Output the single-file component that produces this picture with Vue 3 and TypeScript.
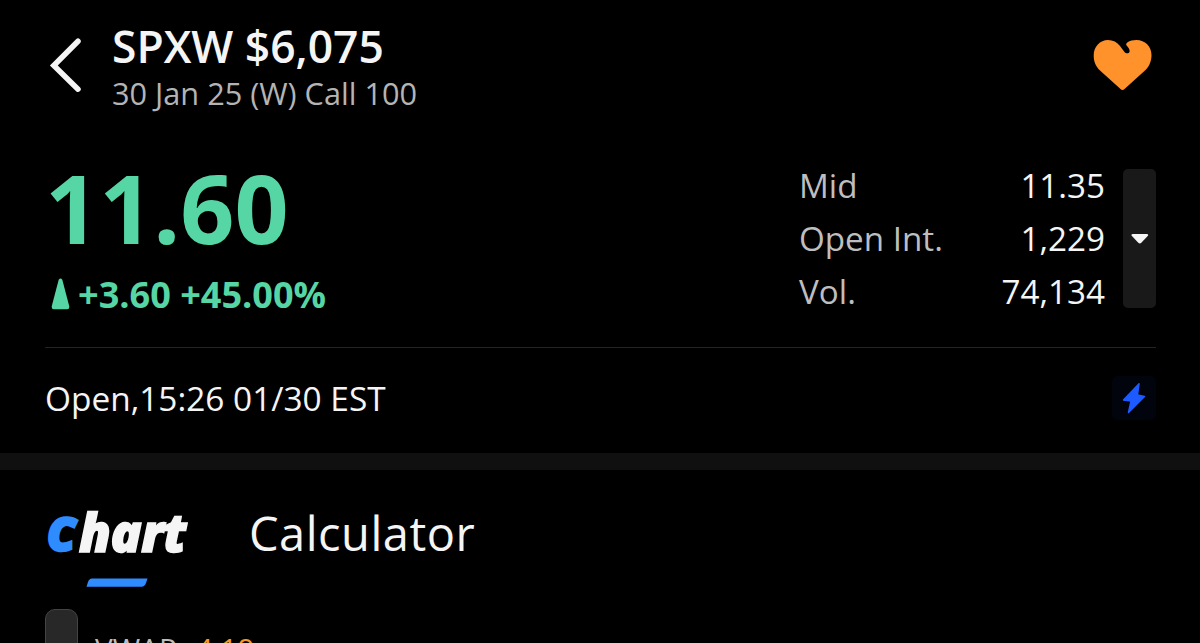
<script setup lang="ts">
interface Stat {
  label: string
  value: string
}

const stats: Stat[] = [
  { label: 'Mid', value: '11.35' },
  { label: 'Open Int.', value: '1,229' },
  { label: 'Vol.', value: '74,134' },
]
</script>

<template>
  <main class="screen">
    <header class="header">
      <svg class="back" width="36" height="60" viewBox="0 0 36 60" aria-label="Back">
        <path d="M32 6.200 L7.800 30.500 L32 54.200" />
      </svg>
      <div class="heading">
        <h1 class="title">SPXW $6,075</h1>
        <p class="subtitle">30 Jan 25 (W) Call 100</p>
      </div>
      <svg class="heart" width="60" height="54" viewBox="0 0 60 54" aria-label="Favorite">
        <path d="M28.500 50 L8 31.500 C3 26.500 1.700 21.500 1.700 16.500 C1.700 7.500 8 1 16 1 C21 1 25 3.200 28 7 L32.300 12.800 C34 15 36.800 14.600 37.500 13 C38.200 11 36.500 8.800 34.800 6.800 C33.900 5.500 34 4.300 35.300 3.400 C37.800 1.700 41 1 44.500 1 C53 1 59.500 7.500 59.500 16 C59.500 21.500 57.700 27 53.500 31 L32.500 50 Q30.500 52 28.500 50 Z" />
      </svg>
    </header>

    <section class="quote">
      <div class="price-block">
        <div class="price">11.60</div>
        <div class="change">
          <svg width="20" height="32" viewBox="0 0 20 32">
            <path d="M7.700 1.800 Q9.500 -0.900 11.300 1.800 L18.200 28 Q18.700 31.300 16.200 31.300 H2.800 Q0.200 31.300 0.800 28 Z" />
          </svg>
          <span>+3.60 +45.00%</span>
        </div>
      </div>
      <dl class="stats">
        <div v-for="stat in stats" :key="stat.label" class="stat">
          <dt>{{ stat.label }}</dt>
          <dd>{{ stat.value }}</dd>
        </div>
      </dl>
      <button class="expand" aria-label="Expand">
        <svg width="18" height="12" viewBox="0 0 18 12">
          <path d="M1.800 1 H15.700 Q18 1.300 16.700 3 L10.300 9.800 Q8.800 11.300 7.300 9.800 L0.900 3 Q-0.300 1.300 1.800 1 Z" />
        </svg>
      </button>
    </section>

    <section class="status">
      <span class="status-text">Open,15:26 01/30 EST</span>
      <span class="bolt">
        <svg width="24" height="32" viewBox="0 0 24 32">
          <path d="M17 1.800 L1.500 18 L9 19 L6.500 30.500 L22.500 14.500 L15.500 13 Z" />
        </svg>
      </span>
    </section>

    <div class="band"></div>

    <nav class="tabs">
      <div class="tab active">
        <span class="tab-label"><span class="initial">C</span><span class="rest">hart</span></span>
        <svg class="underline" width="62" height="9" viewBox="0 0 62 9">
          <path d="M6 0.500 H61.500 L60 5 Q58.500 8.800 55.500 8.800 H0.500 L2 4 Q3.200 0.500 6 0.500 Z" />
        </svg>
      </div>
      <div class="tab plain">Calculator</div>
    </nav>

    <section class="indicator">
      <span class="handle"></span>
      <span class="vwap">VWAP</span>
      <span class="vwap-value">4.19</span>
    </section>
  </main>
</template>

<style>
body {
  background: #000;
}
</style>

<style scoped>
.screen {
  width: 1200px;
  height: 643px;
  overflow: hidden;
  background: #000;
  color: #f5f5f6;
  font-family: "Open Sans", "Noto Sans", sans-serif;
  white-space: nowrap;
}

.header {
  display: flex;
  height: 157px;
  padding: 20px 48px 0 46px;
  box-sizing: border-box;
}

.back {
  margin-top: 15px;
  fill: none;
  stroke: #f5f5f6;
  stroke-width: 5.5;
  stroke-linecap: round;
  stroke-linejoin: miter;
}

.heading {
  flex: 1;
  padding-left: 30px;
}

.title {
  margin: 0;
  font-size: 44.4px;
  line-height: 53px;
  font-weight: 600;
}

.subtitle {
  margin: 0;
  font-size: 30.7px;
  line-height: 41px;
  color: #b4b4b5;
}

.heart {
  margin-top: 19px;
  fill: #ff922b;
}

.quote {
  display: flex;
  height: 190px;
  margin: 0 44px 0 45px;
  border-bottom: 1px solid #232323;
}

.price-block {
  width: 754px;
  color: #55d6a4;
  font-weight: 700;
}

.price {
  font-size: 94.7px;
  line-height: 102px;
}

.change {
  display: flex;
  align-items: center;
  height: 44px;
  margin-top: 13px;
  padding-left: 5.5px;
  gap: 7.5px;
  font-size: 36.1px;
  line-height: 44px;
}

.change svg {
  fill: #55d6a4;
}

.stats {
  width: 306px;
  margin: 2px 0 0;
}

.stat {
  display: flex;
  justify-content: space-between;
  font-size: 33.2px;
  line-height: 53px;
}

.stat dt {
  color: #bebebf;
}

.stat dd {
  margin: 0;
}

.expand {
  display: flex;
  align-items: center;
  justify-content: center;
  width: 33px;
  height: 139px;
  margin: 12px 0 0 18px;
  padding: 0;
  border: 0;
  border-radius: 5px;
  background: #191919;
}

.expand svg {
  fill: #f5f5f6;
}

.status {
  display: flex;
  align-items: center;
  justify-content: space-between;
  height: 44px;
  padding: 28px 44px 33px 45px;
}

.status-text {
  font-size: 33.4px;
  line-height: 44px;
}

.bolt {
  display: flex;
  align-items: center;
  justify-content: center;
  width: 44px;
  height: 44px;
  border-radius: 6px;
  background: #02040d;
}

.bolt svg {
  fill: #1d5bff;
  stroke: #1d5bff;
  stroke-width: 1.5;
  stroke-linejoin: round;
}

.band {
  height: 17px;
  background: #101010;
}

.tabs {
  display: flex;
  height: 139px;
  padding-left: 46px;
}

.tab {
  padding-top: 30px;
}

.active {
  width: 203px;
}

.tab-label {
  display: flex;
  height: 66px;
  font-size: 53px;
  line-height: 64px;
  font-weight: 800;
  font-style: italic;
}

.initial {
  width: 32px;
  padding-left: 1px;
  color: #2f8cff;
  font-size: 45.5px;
  line-height: 67px;
  -webkit-text-stroke: 2.5px #2f8cff;
}

.rest {
  transform: scaleX(0.97);
  transform-origin: 0 0;
  letter-spacing: -0.5px;
  -webkit-text-stroke: 1.4px #f5f5f6;
}

.underline {
  display: block;
  margin: 12px 0 0 40px;
  fill: #2f8cff;
}

.plain {
  font-size: 47px;
  line-height: 66px;
  letter-spacing: 0.5px;
}

.indicator {
  display: flex;
}

.handle {
  box-sizing: border-box;
  width: 33px;
  height: 60px;
  margin: 0 17px 0 45px;
  border: 1px solid #444;
  border-radius: 10px;
  background: #282828;
}

.vwap,
.vwap-value {
  padding-top: 18px;
  font-size: 29.7px;
  line-height: 44px;
  color: #bebebf;
}

.vwap-value {
  margin-left: 19px;
  color: #f59a23;
}
</style>
